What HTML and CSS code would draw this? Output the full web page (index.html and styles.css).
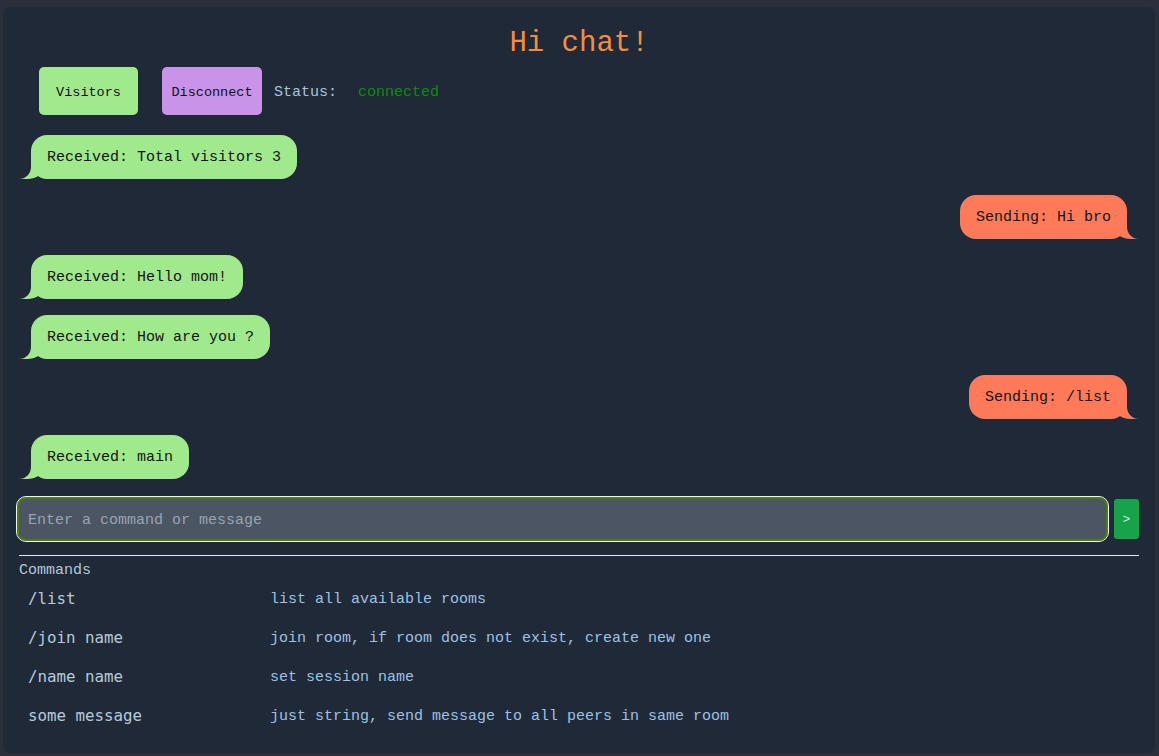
FILE: index.html
```html
<!DOCTYPE html>
<html lang="en">
<head>
<meta charset="utf-8">
<title>Hi chat!</title>
<link rel="stylesheet" href="styles.css">
</head>
<body>
<main class="panel">
  <h1 class="title">Hi chat!</h1>
  <div class="controls">
    <button class="btn btn-visitors">Visitors</button>
    <button class="btn btn-disconnect">Disconnect</button>
    <span class="status-label">Status:</span>
    <span class="status-value">connected</span>
  </div>
  <div class="messages">
    <div class="msg msg-in">Received: Total visitors 3</div>
    <div class="msg msg-out">Sending: Hi bro</div>
    <div class="msg msg-in">Received: Hello mom!</div>
    <div class="msg msg-in">Received: How are you ?</div>
    <div class="msg msg-out">Sending: /list</div>
    <div class="msg msg-in">Received: main</div>
  </div>
  <form class="composer">
    <input class="composer-input" type="text" placeholder="Enter a command or message">
    <button class="composer-send" type="button">&gt;</button>
  </form>
  <hr class="divider">
  <div class="commands-title">Commands</div>
  <div class="commands">
    <div class="cmd">/list</div><div class="desc">list all available rooms</div>
    <div class="cmd">/join name</div><div class="desc">join room, if room does not exist, create new one</div>
    <div class="cmd">/name name</div><div class="desc">set session name</div>
    <div class="cmd">some message</div><div class="desc">just string, send message to all peers in same room</div>
  </div>
</main>
</body>
</html>
```
FILE: styles.css
```css
* { box-sizing: border-box; }
html, body { height: 100%; }
body {
  margin: 0;
  background: #2a2f3a;
  font-family: "Liberation Mono", "DejaVu Sans Mono", monospace;
  font-size: 15px;
  color: #a9c3dc;
  overflow: hidden;
}
.panel {
  margin: 7px 4px 3px 3px;
  height: calc(100% - 10px);
  background: #1f2937;
  border-radius: 8px;
  padding: 19px 16px 18px 16px;
  display: flex;
  flex-direction: column;
}
.title {
  margin: 0;
  text-align: center;
  font-size: 29px;
  line-height: 36px;
  font-weight: normal;
  color: #f78d3c;
}
.controls {
  display: flex;
  align-items: center;
  margin-top: 5px;
  padding-left: 20px;
}
.btn {
  font-family: inherit;
  font-size: 13.5px;
  height: 48px;
  border: none;
  border-radius: 5px;
  color: #111;
  padding: 2px 9px 0;
}
.btn-visitors { width: 99px; background: #a0e98d; }
.btn-disconnect { width: 100px; margin-left: 24px; background: #c893e9; }
.status-label { margin-left: 12px; color: #a9c3dc; padding-top: 2px; }
.status-value { margin-left: 21px; color: #0f8a0f; padding-top: 2px; }
.messages {
  display: flex;
  flex-direction: column;
  gap: 16px;
  margin-top: 20px;
}
.msg {
  position: relative;
  line-height: 20px;
  padding: 13px 16px 11px;
  border-radius: 16px;
  color: #151515;
  max-width: 70%;
}
.msg-in {
  align-self: flex-start;
  margin-left: 12px;
  background: #a0e98d;
}
.msg-out {
  align-self: flex-end;
  margin-right: 12px;
  background: #fe7a59;
}
.msg::before, .msg::after {
  content: "";
  position: absolute;
  bottom: 0;
  height: 22px;
}
.msg-in::before {
  left: -12px;
  width: 26px;
  background: #a0e98d;
  border-bottom-right-radius: 18px 14px;
}
.msg-in::after {
  left: -12px;
  width: 12px;
  background: #1f2937;
  border-bottom-right-radius: 12px;
}
.msg-out::before {
  right: -12px;
  width: 26px;
  background: #fe7a59;
  border-bottom-left-radius: 18px 14px;
}
.msg-out::after {
  right: -12px;
  width: 12px;
  background: #1f2937;
  border-bottom-left-radius: 12px;
}
.composer {
  display: flex;
  align-items: center;
  gap: 6px;
  margin: 18px 0 0 -2px;
}
.composer-input {
  flex: 1;
  height: 44px;
  background: #4b5563;
  border: 2px solid #4d7c0f;
  outline: 1px solid #f1f5f9;
  border-radius: 9px;
  padding: 2px 9px 0;
  font-family: inherit;
  font-size: 15px;
  color: #e5e7eb;
}
.composer-input::placeholder { color: #9aa4b2; }
.composer-send {
  width: 25px;
  height: 40px;
  border: none;
  border-radius: 3px;
  background: #16a34a;
  color: #d1e7dd;
  font-family: inherit;
  font-size: 13px;
  padding: 0;
}
.divider {
  margin: 14px 0 0 0;
  border: none;
  border-top: 1px solid #e5e7eb;
}
.commands-title {
  margin: 6px 0 0 0;
  line-height: 18px;
  color: #b3c8db;
}
.commands {
  display: grid;
  grid-template-columns: 242px 1fr;
  grid-auto-rows: 39px;
  align-items: center;
  padding-left: 9px;
  margin-top: 0;
}
.cmd {
  font-family: "DejaVu Sans Mono", monospace;
  font-size: 15.8px;
  color: #b7c9da;
  margin-top: -3px;
}
.desc {
  color: #9ec2e4;
}
```
